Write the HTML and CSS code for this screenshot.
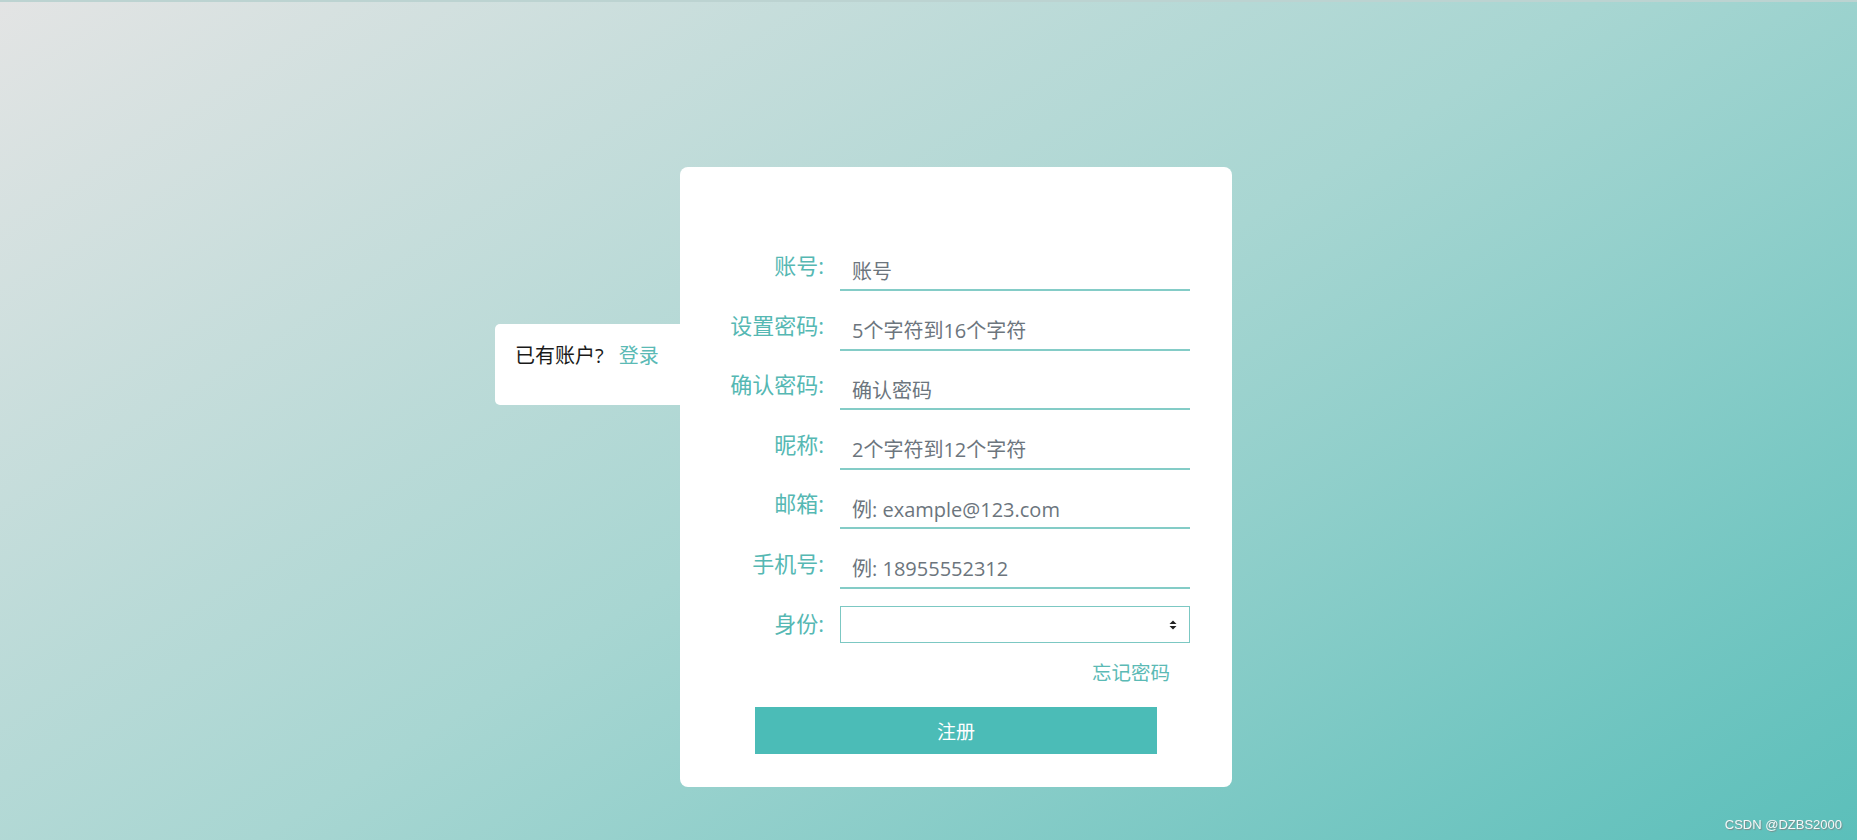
FILE: index.html
```html
<!DOCTYPE html>
<html lang="zh-CN">
<head>
    <meta charset="UTF-8">
    <meta name="viewport" content="width=device-width, initial-scale=1.0">
    <title>注册</title>
    <link rel="stylesheet" href="styles.css">
</head>
<body>
    <div class="page">
        <div class="side">
            <span>已有账户?</span>
            <a href="#" class="link">登录</a>
        </div>
        <div class="card">
            <form class="form">
                <div class="row">
                    <label for="account">账号:</label>
                    <input type="text" id="account" placeholder="账号">
                </div>
                <div class="row">
                    <label for="password">设置密码:</label>
                    <input type="password" id="password" placeholder="5个字符到16个字符">
                </div>
                <div class="row">
                    <label for="confirm">确认密码:</label>
                    <input type="password" id="confirm" placeholder="确认密码">
                </div>
                <div class="row">
                    <label for="nickname">昵称:</label>
                    <input type="text" id="nickname" placeholder="2个字符到12个字符">
                </div>
                <div class="row">
                    <label for="email">邮箱:</label>
                    <input type="text" id="email" placeholder="例: example@123.com">
                </div>
                <div class="row">
                    <label for="phone">手机号:</label>
                    <input type="text" id="phone" placeholder="例: 18955552312">
                </div>
                <div class="row row-select">
                    <label for="role">身份:</label>
                    <div class="select-wrap">
                        <select id="role">
                            <option value=""></option>
                            <option value="student">学生</option>
                            <option value="teacher">教师</option>
                        </select>
                        <svg class="arrows" width="8" height="10" viewBox="0 0 8 10">
                            <polygon points="0.5,4 4,0.5 7.5,4" fill="#222"/>
                            <polygon points="0.5,6 4,9.5 7.5,6" fill="#222"/>
                        </svg>
                    </div>
                </div>
                <div class="forget">
                    <a href="#" class="link">忘记密码</a>
                </div>
                <button type="button" class="submit">注册</button>
            </form>
        </div>
    </div>
    <div class="mark">CSDN @DZBS2000</div>
</body>
</html>
```

FILE: styles.css
```css
html, body {
    margin: 0;
    height: 100%;
}
body {
    font-family: "Open Sans", "Noto Sans CJK SC", sans-serif;
    background: linear-gradient(148deg, #e3e4e4 0%, #a8d6d2 50%, #5bbfba 100%);
    overflow: hidden;
    box-shadow: inset 0 2px 0 #bcd3d1;
}
.page {
    display: flex;
    align-items: flex-start;
    padding: 167px 0 0 495px;
}
.side {
    width: 185px;
    height: 81px;
    margin-top: 157px;
    box-sizing: border-box;
    padding: 20px 0 0 20px;
    background: white;
    border-radius: 5px 0 0 5px;
    font-size: 20px;
    line-height: 24px;
    color: #1a1a1a;
}
.side .link {
    margin-left: 10px;
}
.link {
    color: #5bbab5;
    text-decoration: none;
}
.card {
    width: 552px;
    height: 620px;
    box-sizing: border-box;
    padding: 86px 42px 0 20px;
    background: white;
    border-radius: 8px;
}
.row {
    display: grid;
    grid-template-columns: 124px 350px;
    grid-template-rows: 38px;
    column-gap: 16px;
    align-items: center;
    height: 38px;
}
.row + .row {
    margin-top: 21.6px;
}
.row label {
    text-align: right;
    color: #55b8b3;
    font-size: 22px;
    line-height: 22px;
    padding-bottom: 14px;
    white-space: nowrap;
}
.row input {
    height: 38px;
    box-sizing: border-box;
    border: none;
    border-bottom: 2px solid #84ccc7;
    padding: 0 0 0 12px;
    font-family: "Open Sans", "Noto Sans CJK SC", sans-serif;
    font-size: 20px;
    color: #333;
    outline: none;
    background: transparent;
}
.row input::placeholder {
    color: #6c757d;
}
.row-select {
    height: 37px;
    grid-template-rows: 37px;
}
.row.row-select {
    margin-top: 17px;
}
.row-select label {
    padding-bottom: 2px;
}
.select-wrap {
    position: relative;
    height: 37px;
}
.select-wrap select {
    appearance: none;
    -webkit-appearance: none;
    width: 100%;
    height: 37px;
    box-sizing: border-box;
    border: 1px solid #7cc8c3;
    border-radius: 0;
    background: white;
    padding: 0 12px;
    font-size: 18px;
    outline: none;
}
.arrows {
    position: absolute;
    right: 13px;
    top: 14px;
    pointer-events: none;
}
.forget {
    margin-top: 18px;
    width: 490px;
    box-sizing: border-box;
    padding-right: 20px;
    text-align: right;
    font-size: 19.5px;
    line-height: 24px;
}
.submit {
    display: block;
    width: 402px;
    height: 47px;
    margin: 22px 0 0 55px;
    border: none;
    background: #4bbcb7;
    color: white;
    font-family: "Noto Sans CJK SC", sans-serif;
    font-size: 19px;
    cursor: pointer;
}
.mark {
    position: fixed;
    right: 15px;
    bottom: 8px;
    font-family: "Liberation Sans", Arial, sans-serif;
    font-size: 13px;
    color: #f4f8f8;
    text-shadow: 1px 1px 1px #7a8a8a;
}
```
